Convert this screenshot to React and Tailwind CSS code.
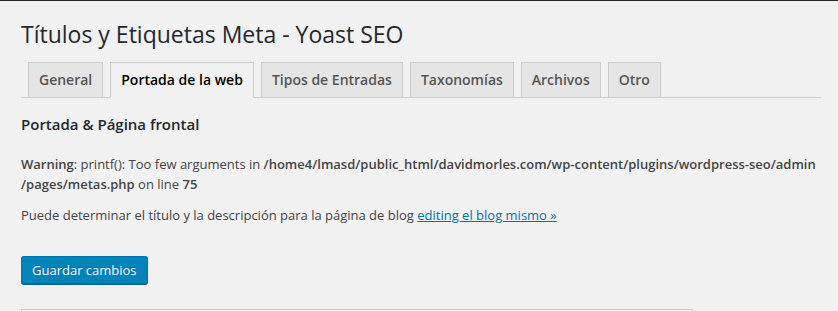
import React from "react";

const tabs = ["General", "Portada de la web", "Tipos de Entradas", "Taxonomías", "Archivos", "Otro"];
const active = "Portada de la web";

export default function App() {
  return (
    <div className="h-screen overflow-hidden bg-[#f1f1f1] font-['Open_Sans',sans-serif] text-[13px] text-[#444]">
      <div className="h-px bg-[#23282d]" />
      <div className="pl-[21px] pr-[17px] pt-[19px]">
        <h1 className="text-[23px] leading-[29px] font-normal text-[#23282d]">
          Títulos y Etiquetas Meta - Yoast SEO
        </h1>

        <div className="mt-[13px] flex items-end border-b border-[#ccc]">
          {tabs.map(t => (
            <a
              key={t}
              href="#"
              className={`ml-[7px] -mb-px border border-[#ccc] px-[10px] py-[5px] text-[14px] leading-[24px] font-semibold whitespace-nowrap ${
                t === active ? "bg-[#f1f1f1] text-black border-b-[#f1f1f1]" : "bg-[#e5e5e5] text-[#555]"
              }`}
            >
              {t}
            </a>
          ))}
        </div>

        <h2 className="mt-[16px] text-[15px] leading-[20px] font-semibold text-[#23282d]">
          Portada &amp; Página frontal
        </h2>

        {/* php notice printed inside the page */}
        <p className="mt-[21px] leading-[19.5px] whitespace-nowrap">
          <b className="font-semibold">Warning</b>: printf(): Too few arguments in{" "}
          <b className="font-semibold">/home4/lmasd/public_html/davidmorles.com/wp-content/plugins/wordpress-seo/admin</b>
          <br />
          <b className="font-semibold">/pages/metas.php</b> on line <b className="font-semibold">75</b>
        </p>

        <p className="mt-[12px] leading-[19.5px]">
          Puede determinar el título y la descripción para la página de blog{" "}
          <a href="#" className="text-[#0073aa] underline">editing el blog mismo »</a>
        </p>

        <button className="mt-[30px] h-[28px] px-[10px] pb-px rounded-[3px] border border-[#0073aa] border-b-[#006799] bg-[#0085ba] text-[13px] leading-[26px] text-white shadow-[0_1px_0_#006799] [text-shadow:0_-1px_1px_#006799]">
          Guardar cambios
        </button>

        <div className="mt-[25px] w-[672px] h-[20px] border border-[#ccc] bg-[#f1f1f1]" />
      </div>
    </div>
  );
}
